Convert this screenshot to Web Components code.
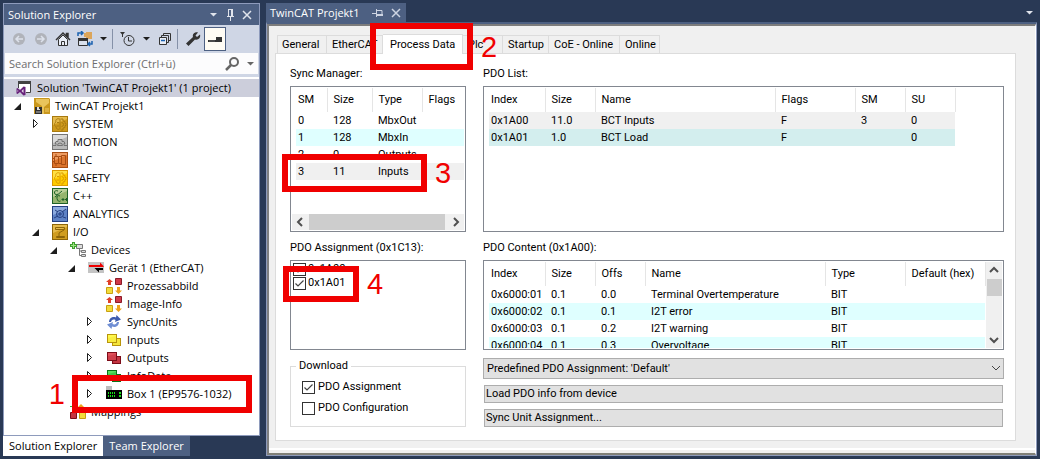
<!DOCTYPE html>
<html lang="en">
<head>
<meta charset="utf-8">
<title>TwinCAT Projekt1</title>
<style>
  html, body { margin: 0; height: 100%; }
  body { background: #293955; color: #000; font: 11px/16px "Open Sans", "Noto Sans", sans-serif; }
  app-shell { --form-font: 11px/16px Roboto, "Liberation Sans", sans-serif; }
</style>
</head>
<body>
<app-shell>
  <tool-window slot="side" heading="Solution Explorer">
    <explorer-toolbar slot="bar"></explorer-toolbar>
    <search-box slot="bar" hint="Search Solution Explorer (Ctrl+ü)"></search-box>
    <tree-item root selected icon="solution" label="Solution 'TwinCAT Projekt1' (1 project)">
      <tree-item open icon="project" label="TwinCAT Projekt1">
        <tree-item closed icon="system" label="SYSTEM"></tree-item>
        <tree-item icon="motion" label="MOTION"></tree-item>
        <tree-item icon="plc" label="PLC"></tree-item>
        <tree-item icon="safety" label="SAFETY"></tree-item>
        <tree-item icon="cpp" label="C++"></tree-item>
        <tree-item icon="analytics" label="ANALYTICS"></tree-item>
        <tree-item open icon="io" label="I/O">
          <tree-item open icon="devices" label="Devices">
            <tree-item open icon="ethercat" label="Gerät 1 (EtherCAT)">
              <tree-item icon="image" label="Prozessabbild"></tree-item>
              <tree-item icon="image" label="Image-Info"></tree-item>
              <tree-item closed icon="sync" label="SyncUnits"></tree-item>
              <tree-item closed icon="inputs" label="Inputs"></tree-item>
              <tree-item closed icon="outputs" label="Outputs"></tree-item>
              <tree-item closed icon="info" label="InfoData"></tree-item>
              <tree-item closed icon="box" label="Box 1 (EP9576-1032)">
                <call-out slot="mark" number="1" before style="--x:-12px;--y:-10px;--w:180px;--h:38px"></call-out>
              </tree-item>
            </tree-item>
          </tree-item>
          <tree-item icon="mappings" label="Mappings"></tree-item>
        </tree-item>
      </tree-item>
    </tree-item>
    <dock-tab slot="tabs" active label="Solution Explorer"></dock-tab>
    <dock-tab slot="tabs" label="Team Explorer"></dock-tab>
  </tool-window>

  <document-window heading="TwinCAT Projekt1">
    <tab-control>
      <tab-button slot="tabs" label="General" style="--w:50px"></tab-button>
      <tab-button slot="tabs" label="EtherCAT" style="--w:56px"></tab-button>
      <tab-button slot="tabs" label="Process Data" active style="--w:80px">
        <call-out number="2" style="--x:-13px;--y:-11px;--w:103px;--h:47px"></call-out>
      </tab-button>
      <tab-button slot="tabs" label="Plc" style="--w:40px"></tab-button>
      <tab-button slot="tabs" label="Startup" style="--w:46px"></tab-button>
      <tab-button slot="tabs" label="CoE - Online" style="--w:71px"></tab-button>
      <tab-button slot="tabs" label="Online" style="--w:40px"></tab-button>

      <list-field label="Sync Manager:" style="--box:146px">
        <data-list name="sync" scroll="x"></data-list>
        <call-out slot="mark" number="3" style="--x:-8px;--y:68px;--w:145px;--h:38px"></call-out>
      </list-field>
      <list-field label="PDO List:" style="--box:146px">
        <data-list name="pdo"></data-list>
      </list-field>
      <list-field label="PDO Assignment (0x1C13):" style="--box:90px">
        <check-option tight checked label="0x1A00"></check-option>
        <check-option tight checked label="0x1A01"></check-option>
        <call-out slot="mark" number="4" style="--x:-7px;--y:6px;--w:76px;--h:36px"></call-out>
      </list-field>
      <list-field label="PDO Content (0x1A00):" style="--box:90px">
        <data-list name="content" scroll="y"></data-list>
      </list-field>
      <group-box label="Download">
        <check-option checked label="PDO Assignment"></check-option>
        <check-option label="PDO Configuration"></check-option>
      </group-box>
      <action-stack></action-stack>
    </tab-control>
  </document-window>
</app-shell>

<script>
const tile = (a, b, line, inner) =>
  `<rect x="0.5" y="0.5" width="15" height="15" fill="${a}" stroke="${line}"/><path d="M1 15V9L15 3v12z" fill="${b}"/><g fill="none" stroke="${line}">${inner}</g>`;
const stack = (back, front, line) =>
  `<rect x="6.5" y="6.5" width="8" height="7" fill="${back}" stroke="${line}"/><rect x="1.5" y="2.5" width="9" height="8" fill="${front}" stroke="${line}"/><path d="M2 10V6l8-2v6z" fill="${back}" opacity=".6"/>`;
const brain = '<path d="M8 2.5v11M7.5 3C5 2 3 4 4 6 2 7 2 10 4 10.5 4 13 6 14 7.5 13M5 6.5h2M4.5 10H7"/><path d="M9 3h2v2l2 .5v2h1v2h-1v2l-2 .5v2H9M9.5 6.5a2 2 0 0 1 0 4"/>';

/* 16 x 16 drawings, keyed by the name an ui-icon asks for */
const ICONS = {
  solution: '<path d="M2.5 8V1.5h12v11H10" fill="#fff" stroke="#424242"/><path d="M2 1h13v3H2z" fill="#424242"/><path d="M7.500 6.500L4 10 1.500 8 .5 8.500v5l1 .5L4 12l3.500 3.500L9.500 15V7z" fill="#68217a"/><path d="M7.500 9v4L5.500 11zM1.500 10v2l1-1z" fill="#e8dcec"/>',
  project: '<path d="M0 0h15l1 1v15H0z" fill="#c9971c"/><path d="M2 1h13v4l-5 4v7H8V8L2 4z" fill="#e9c45c"/><path d="M11 10h4v4h-4z" fill="#dcb040"/><path d="M1 9h7v7H1z" fill="#303030"/><path d="M3 9h3v3H3z" fill="#ddd"/><path d="M5 9h1v2H5z" fill="#303030"/><path d="M2 13h5v2H2z" fill="#777"/>',
  system: tile('#e6bb4c', '#cf9a1c', '#a87a10', brain),
  motion: tile('#dadada', '#b9b9b9', '#747474', '<path d="M1 11.5h3v-2h-1l1-2h2v-2h4v2h2l1 2h-1v2h3M5.500 11.500a2.500 2.500 0 0 1 5 0z"/>'),
  plc: tile('#ee9c62', '#dc752d', '#a94d12', '<path d="M2.5 4.500h4v7h-4zM9.500 3.500h4v9h-4zM1 6.500h1M1 9.500h1M7 4.500h2M7 11.500h2M4 2v2M4 12v2"/>'),
  safety: tile('#ffe044', '#ffcc00', '#dc9a00', brain),
  cpp: tile('#b9cf98', '#95b56e', '#1f6228', '<path d="M6 3C4 2 2 3 2.500 5S5 7 6 6M8 8C6 7 4.500 8 5 10.500S7 14 8.500 13M3 9l7-6M9.500 11.500h3M11 10v3M13 11.500h3M14.500 10v3"/>'),
  analytics: tile('#8caade', '#5e82c6', '#243f80', '<path d="M2 12l4-2M10 6l4-3M3 4l3 2M11 11l3 1"/><circle cx="8" cy="8" r="3.500"/><path d="M6 8h4M8 6v4"/>'),
  io: tile('#e6bb4c', '#d09d20', '#8d6509', '<path d="M3.500 3.500h9v2h-9zM12 6L7 9v3M4.500 12.500h8v1h-8z"/>'),
  devices: '<path d="M9.500 6v7.500H12M9.500 9H12" fill="none" stroke="#777"/><path d="M6.500 2.500h6v4h-6zM11.500 8.500h4v2h-4zM11.500 12.500h4v2h-4z" fill="#ddd" stroke="#777"/><path d="M2 0h3v2h2v3H5v2H2V5H0V2h2z" fill="#3e9e2e"/><path d="M3 1h1v5H3zM1 3h5v1H1z" fill="#9be37f"/>',
  ethercat: '<path d="M0 2h16v11H0z" fill="#c4c4c4"/><path d="M1 5h11V2.500L16 6.500 15 7H1z" fill="#f00000"/><path d="M15 8v2h-4v2.500L6.500 8z" fill="#000"/>',
  image: '<path d="M3.500 1l3.500 3H5v3H2V4H0z" fill="#e04028"/><path d="M9.500.5h6v6h-6z" fill="#d03848" stroke="#8a1c28"/><path d="M.5 9.500h6v6h-6z" fill="#f2dc3c" stroke="#c8a010"/><path d="M12.500 16L9 12.500h2V9h3v3.500h2z" fill="#efa41c"/>',
  sync: '<path d="M3 8C3 4 7 2 10 3.500L10.500 1 15 5.500 9 8l.5-2C7 5 5.500 6 5 8z" fill="#3d5cae"/><path d="M13 8c0 4-4 6-7 4.500L5.500 15 1 10.500 7 8l-.5 2C9 11 10.500 10 11 8z" fill="#6f8ed4"/>',
  inputs: stack('#f4e43a', '#fff94c', '#b8940c'),
  outputs: stack('#c43440', '#e0525c', '#7c0c18'),
  info: stack('#2eb83c', '#58e060', '#0a7418'),
  box: '<path d="M0 0h6v5H0z" fill="#bdbdbd"/><path d="M0 4h16v9H0z" fill="#000"/><path d="M2 6h1v2H2zM4 6h1v2H4zM6 6h1v2H6zM8 6h1v2H8zM2 9h1v2H2zM4 9h1v2H4zM6 9h1v2H6zM8 9h1v2H8zM13 6h2v2h-2zM13 9h2v2h-2z" fill="#18e018"/>',
  mappings: '<path d="M0 2h3v1H0z" fill="#2eb83c"/><path d="M11 0l4 4h-8z" fill="#efa41c"/><path d="M.5 8.500h6v6h-6z" fill="#c43440" stroke="#7c0c18"/><path d="M9.500 8.500h6v6h-6z" fill="#f2dc3c" stroke="#c8a010"/>',
  back: '<circle cx="8" cy="8" r="6" fill="#b0b3ba"/><path d="M12 8H5M8 5L5 8l3 3" fill="none" stroke="#dde2ec" stroke-width="1.500"/>',
  forward: '<circle cx="8" cy="8" r="6" fill="#b0b3ba"/><path d="M4 8h7M8 5l3 3-3 3" fill="none" stroke="#dde2ec" stroke-width="1.500"/>',
  home: '<path d="M1 9l7-7 7 7M11.500 5V2.500h1.500V7" fill="none" stroke="#333" stroke-width="1.500"/><path d="M3.500 8.500v6h9v-6L8 4z" fill="#e9edf5" stroke="#333"/><path d="M6.500 14.500v-4h3v4" fill="none" stroke="#333"/>',
  views: '<path d="M9 1h6v7H9zM7 2h4v4H7z" fill="#dba55a"/><path d="M1.500 8.500h9v6h-9z" fill="#d9e0ec" stroke="#333"/><path d="M1 7h10v3H1z" fill="#333"/><path d="M1 5V2h4M4 0l2 2-2 2M15 10v3h-3M13 11l-2 2 2 2" fill="none" stroke="#1b62b0" stroke-width="1.500"/>',
  pending: '<path d="M0 1h5L3 3.500V6H2V3.500z" fill="#333"/><circle cx="9" cy="9.500" r="5" fill="none" stroke="#333"/><path d="M8.500 6v4H12" fill="none" stroke="#333"/>',
  collapse: '<path d="M7.500 4V2.500h7v7H13M5.500 6V4.500h7v7H11" fill="none" stroke="#333"/><path d="M3.500 6.500h7v7h-7z" fill="#e9edf5" stroke="#333"/><path d="M5 9.500h4" stroke="#1b62b0" stroke-width="1.500"/>',
  wrench: '<path d="M15 3.500L12 6 10.500 4.500 13 1.500C10 .5 7 3 8 6L1 12.500 3.500 15 10 8.500c3 1 6-1.500 5-5z" fill="#333"/>',
  preview: '<path d="M1 9h8V6h6v5H1z" fill="#333"/><path d="M2 10h6" stroke="#666"/>',
  search: '<circle cx="10" cy="6" r="4" fill="none" stroke="#666" stroke-width="2"/><path d="M7 9l-5 5" stroke="#666" stroke-width="2.500"/>',
  drop: '<path d="M5 6h7L8.500 9.500z" fill="currentColor"/>',
  pin: '<path d="M5 9.500h7M8.500 10v4M6.500 3v6M6 2.500h5M10 3v6" fill="none" stroke="currentColor"/><path d="M9 3h2v6H9z" fill="currentColor"/>',
  pinSide: '<path d="M6.500 4v8M7 5.500h5v4M2 8.500h4" fill="none" stroke="currentColor"/><path d="M7 9h6v2H7z" fill="currentColor"/>',
  close: '<path d="M4 4l8 8M12 4l-8 8" stroke="currentColor" stroke-width="1.500"/>',
  opened: '<path d="M9 5v7H2z" fill="#1e1e1e"/>',
  closed: '<path d="M3.500 3.500v8l4-4z" fill="#fff" stroke="#1e1e1e"/>',
  left: '<path d="M10 4L6 8l4 4" fill="none" stroke="#505050" stroke-width="2"/>',
  right: '<path d="M6 4l4 4-4 4" fill="none" stroke="#505050" stroke-width="2"/>',
  up: '<path d="M4 10l4-4 4 4" fill="none" stroke="#505050" stroke-width="2"/>',
  down: '<path d="M4 6l4 4 4-4" fill="none" stroke="#505050" stroke-width="2"/>',
  chevron: '<path d="M4 6l4 4 4-4" fill="none" stroke="#444"/>'
};

/* Shared base: opens the shadow root and fills it from the class's view(). */
class Part extends HTMLElement {
  connectedCallback() {
    if (this.shadowRoot) return;
    const template = document.createElement('template');
    template.innerHTML = `<style>*{box-sizing:border-box}button{font:inherit;color:inherit;margin:0;padding:0;border:0;background:none}:host{box-sizing:border-box}</style>${this.view()}`;
    this.attachShadow({ mode: 'open' }).append(template.content.cloneNode(true));
  }
  get label() { return this.getAttribute('label') || ''; }
  has(name) { return this.hasAttribute(name); }
}

customElements.define('ui-icon', class extends Part {
  view() {
    return `<style>:host{display:block;flex:none;width:16px;height:16px}svg{display:block}</style>
      <svg width="16" height="16" viewBox="0 0 16 16" aria-hidden="true">${ICONS[this.getAttribute('name')]}</svg>`;
  }
});

customElements.define('app-shell', class extends Part {
  view() {
    return `<style>
      :host{display:grid;grid-template-columns:257px minmax(0,1fr);gap:6px;min-height:100%;padding:3px}
      ::slotted(*){min-width:0}</style>
      <slot name="side"></slot><slot></slot>`;
  }
});

customElements.define('tool-window', class extends Part {
  view() {
    return `<style>
      :host{display:flex;flex-direction:column}
      section{display:flex;flex-direction:column;border:1px solid #8e9bbc;background:#cfd6e5;min-height:433px}
      header{display:flex;align-items:center;height:21px;padding:0 4px;background:#4d6082;color:#fff}
      h2{flex:1;margin:0;font:inherit}
      header button{width:16px;height:16px;margin-left:1px;color:#e0e4ec}
      .tree{flex:1;margin-top:3px;padding-top:2px;background:#fff}
      nav{display:flex}</style>
      <section><header><h2>${this.getAttribute('heading')}</h2>
        <button aria-label="Window menu"><ui-icon name="drop"></ui-icon></button>
        <button aria-label="Auto hide"><ui-icon name="pin"></ui-icon></button>
        <button aria-label="Close"><ui-icon name="close"></ui-icon></button></header>
        <slot name="bar"></slot><div class="tree" role="tree"><slot></slot></div></section>
      <nav><slot name="tabs"></slot></nav>`;
  }
});

customElements.define('explorer-toolbar', class extends Part {
  view() {
    const button = (icon, name, cls = '') =>
      `<button class="${cls}" aria-label="${name}"><ui-icon name="${icon}"></ui-icon></button>`;
    return `<style>
      :host{display:flex;align-items:center;height:28px;padding-left:4px;color:#1e1e1e}
      button{display:flex;justify-content:center;align-items:center;width:22px;height:24px}
      .drop{width:14px}
      .on{border:1px solid #4d6082;background:#fffcf4}
      i{width:1px;height:20px;margin:0 4px 0 2px;background:#8591a8}</style>
      ${button('back', 'Back')}${button('forward', 'Forward')}${button('home', 'Home')}${button('views', 'Switch views')}
      ${button('drop', 'Views menu', 'drop')}<i></i>${button('pending', 'Pending changes filter')}${button('drop', 'Filter menu', 'drop')}
      ${button('collapse', 'Collapse all')}<i></i>${button('wrench', 'Properties')}${button('preview', 'Preview selected items', 'on')}`;
  }
});

customElements.define('search-box', class extends Part {
  view() {
    return `<style>
      :host{display:flex;align-items:center;height:21px;margin:0 1px;padding-left:4px;background:#fcfcfd;color:#1e1e1e}
      input{flex:1;min-width:0;padding:0;border:0;outline:0;background:none;font:inherit}
      input::placeholder{color:#6d6d6d;opacity:1}
      button{width:16px;height:16px;color:#666}
      button:first-of-type{margin-right:2px}</style>
      <input type="search" aria-label="Search Solution Explorer" placeholder="${this.getAttribute('hint')}">
      <button aria-label="Search"><ui-icon name="search"></ui-icon></button>
      <button aria-label="Search options"><ui-icon name="drop"></ui-icon></button>`;
  }
});

customElements.define('tree-item', class extends Part {
  view() {
    const arrow = this.has('open') ? 'opened' : this.has('closed') ? 'closed' : '';
    return `<style>
      :host{display:block}
      .row{position:relative;display:flex;align-items:center;height:18px;white-space:nowrap}
      .lead{flex:none;width:22px}
      .row ui-icon + span{margin-left:5px}
      .group{padding-left:18px}
      :host([root]) .lead{width:12px}
      :host([root]) .group{padding-left:8px}
      :host([selected]) .row{background:#cccedb}</style>
      <div class="row" role="treeitem"><div class="lead">${arrow ? `<ui-icon name="${arrow}"></ui-icon>` : ''}</div>
        <ui-icon name="${this.getAttribute('icon')}"></ui-icon><span>${this.label}</span><slot name="mark"></slot></div>
      <div class="group" role="group"><slot></slot></div>`;
  }
});

customElements.define('dock-tab', class extends Part {
  view() {
    return `<style>
      :host{display:block}
      button{height:20px;padding:0 6px;background:#4d6082;color:#fff}
      :host([active]) button{background:#fff;color:#000}</style><button>${this.label}</button>`;
  }
});

customElements.define('document-window', class extends Part {
  view() {
    return `<style>
      :host{display:flex;flex-direction:column;color:#000}
      header{display:flex;align-items:center;justify-content:space-between;height:19px;color:#e0e4ec}
      .tab{display:flex;align-items:center;height:19px;width:140px;padding:0 2px 0 4px;background:#4d6082;color:#fff}
      .tab span{flex:1}
      .tab ui-icon{color:#cdd4e2}
      button{width:16px;height:16px;margin-left:2px}
      .frame{border:1px solid #8e9bbc;border-top:2px solid #4d6082}
      .edge{border:solid;border-width:2px 1px 2px 2px;border-color:#7c7c7c #fff #808078 #808080;background:#f0f0f0;padding:7px 19px 0 6px}
      .foot{height:5px;margin:7px -19px 0 -6px;border-top:2px solid #fff}</style>
      <header><div class="tab"><span>${this.getAttribute('heading')}</span>
        <button aria-label="Pin tab"><ui-icon name="pinSide"></ui-icon></button>
        <button aria-label="Close tab"><ui-icon name="close"></ui-icon></button></div>
        <button aria-label="Open documents"><ui-icon name="drop"></ui-icon></button></header>
      <div class="frame"><div class="edge"><slot></slot><div class="foot"></div></div></div>`;
  }
});

customElements.define('tab-control', class extends Part {
  view() {
    return `<style>
      :host{display:block;font:var(--form-font)}
      nav{display:flex;align-items:flex-end;height:20px;padding-left:2px}
      .page{display:grid;grid-template-columns:176px minmax(0,1fr);column-gap:17px;row-gap:8px;padding:12px 11px 13px 14px;border:1px solid #dcdcdc;background:#fff}</style>
      <nav role="tablist"><slot name="tabs"></slot></nav><div class="page"><slot></slot></div>`;
  }
});

customElements.define('tab-button', class extends Part {
  view() {
    return `<style>
      :host{display:block;position:relative;width:var(--w);height:18px}
      button{width:100%;height:18px;padding-left:5px;border:1px solid #dcdcdc;border-width:1px 1px 0 0;background:#f0f0f0;text-align:left;white-space:nowrap}
      :host(:first-child) button{padding-left:4px;border-left-width:1px}
      :host([active]){height:20px;margin-bottom:-1px}
      :host([active]) button{height:20px;padding-left:7px;background:#fff}</style>
      <button role="tab">${this.label}</button><slot></slot>`;
  }
});

customElements.define('list-field', class extends Part {
  view() {
    return `<style>
      :host{display:block;min-width:0}
      h3{margin:0 0 4px;font:inherit}
      .wrap{position:relative}
      .box{height:var(--box);padding:1px;overflow:hidden;border:1px solid #828790;background:#fff}</style>
      <h3>${this.label}</h3><div class="wrap"><div class="box" role="group" aria-label="${this.label}"><slot></slot></div><slot name="mark"></slot></div>`;
  }
});

const LISTS = {
  sync: {
    widths: [31, 45, 50, 43], heads: ['SM', 'Size', 'Type', 'Flags'],
    rows: [['0', '128', 'MbxOut', ''], ['1', '128', 'MbxIn', ''], ['2', '0', 'Outputs', ''], ['3', '11', 'Inputs', '']],
    tints: ['', '#dfffff', '', '#f0f0f0']
  },
  pdo: {
    widths: [56, 50, 180, 80, 50, 50], heads: ['Index', 'Size', 'Name', 'Flags', 'SM', 'SU'],
    rows: [['0x1A00', '11.0', 'BCT Inputs', 'F', '3', '0'], ['0x1A01', '1.0', 'BCT Load', 'F', '', '0']],
    tints: ['#f0f0f0', '#d3eeee']
  },
  content: {
    widths: [56, 50, 50, 180, 80, 80], heads: ['Index', 'Size', 'Offs', 'Name', 'Type', 'Default (hex)'],
    rows: [['0x6000:01', '0.1', '0.0', 'Terminal Overtemperature', 'BIT', ''], ['0x6000:02', '0.1', '0.1', 'I2T error', 'BIT', ''],
      ['0x6000:03', '0.1', '0.2', 'I2T warning', 'BIT', ''], ['0x6000:04', '0.1', '0.3', 'Overvoltage', 'BIT', '']],
    tints: ['', '#dfffff', '', '#dfffff']
  }
};

customElements.define('data-list', class extends Part {
  view() {
    const list = LISTS[this.getAttribute('name')];
    const scroll = this.getAttribute('scroll');
    const bar = scroll === 'x'
      ? '<div class="bar"><ui-icon name="left"></ui-icon><i></i><ui-icon name="right"></ui-icon></div>'
      : scroll === 'y' ? '<div class="bar"><ui-icon name="up"></ui-icon><i></i><ui-icon name="down"></ui-icon></div>' : '';
    return `<style>
      :host{display:flex;height:100%}
      :host([scroll=x]){flex-direction:column}
      .view{flex:1;min-width:0;min-height:0;overflow:hidden;padding-left:4px}
      table{border-collapse:collapse;table-layout:fixed;width:1px}
      th,td{overflow:hidden;padding:0 0 0 6px;font:inherit;text-align:left;white-space:nowrap}
      th{height:24px;border-right:1px solid #e5e5e5}
      td{height:17px;padding-top:1px}
      th:first-child,td:first-child{padding-left:2px}
      .bar{display:flex;align-items:center;background:#f0f0f0}
      :host([scroll=x]) .bar{height:16px}
      :host([scroll=x]) i{flex:1;height:16px;margin:0 3px 0 1px;background:#cdcdcd}
      :host([scroll=y]) .bar{width:16px;flex-direction:column;justify-content:space-between}
      :host([scroll=y]) i{width:15px;height:17px;margin-bottom:36px;background:#cdcdcd}</style>
      <div class="view"><table><colgroup>${list.widths.map(w => `<col style="width:${w}px">`).join('')}</colgroup>
        <thead><tr>${list.heads.map(h => `<th>${h}</th>`).join('')}</tr></thead>
        <tbody>${list.rows.map((row, i) => `<tr style="background:${list.tints[i] || 'none'}">${row.map(c => `<td>${c}</td>`).join('')}</tr>`).join('')}</tbody>
      </table></div>${bar}`;
  }
});

customElements.define('check-option', class extends Part {
  view() {
    return `<style>
      :host{display:block;height:20px}
      :host([tight]){height:14px}
      label{display:flex;align-items:center;gap:3px;height:100%}
      :host([tight]) label{padding-left:1px;gap:2px}
      span{display:grid}
      input,svg{grid-area:1/1;width:13px;height:13px;margin:0}
      input{appearance:none;border:1px solid #333;background:#fff}
      svg{display:none;pointer-events:none}
      input:checked + svg{display:block}</style>
      <label><span><input type="checkbox" ${this.has('checked') ? 'checked' : ''}><svg viewBox="0 0 13 13"><path d="M2.500 6.500L5 9l5.500-5.500" fill="none" stroke="#444" stroke-width="1.200"/></svg></span>${this.label}</label>`;
  }
});

customElements.define('group-box', class extends Part {
  view() {
    return `<style>
      :host{display:block}
      fieldset{height:69px;margin:0;padding:3px 0 0 11px;border:1px solid #dcdcdc;min-width:0}
      legend{margin-left:-6px;padding:0 3px}
      slot{display:grid;row-gap:1px}</style>
      <fieldset><legend>${this.label}</legend><slot></slot></fieldset>`;
  }
});

customElements.define('action-stack', class extends Part {
  view() {
    return `<style>
      :host{display:flex;flex-direction:column;gap:6px}
      .pick{position:relative;display:grid}
      select{height:21px;padding:0 20px 0 3px;appearance:none;border:1px solid #adadad;border-radius:0;background:#e1e1e1;color:#000;font:inherit}
      .pick ui-icon{position:absolute;right:0;top:2px;pointer-events:none}
      button{height:18px;margin:0 1px;padding:0 0 0 1px;border:1px solid #adadad;background:#e1e1e1;text-align:left}</style>
      <div class="pick"><select aria-label="Predefined PDO Assignment"><option>Predefined PDO Assignment: 'Default'</option></select><ui-icon name="chevron"></ui-icon></div>
      <button>Load PDO info from device</button><button>Sync Unit Assignment...</button>`;
  }
});

/* Numbered frame laid over the control it points out. */
customElements.define('call-out', class extends Part {
  view() {
    return `<style>
      :host{position:absolute;z-index:5;left:var(--x);top:var(--y);width:var(--w);height:var(--h);display:flex;align-items:center;border:6px solid #f00000;color:#f00000;font:29px/30px "Liberation Sans",Arial,sans-serif;pointer-events:none}
      span{position:absolute;left:100%;padding-left:14px}
      :host([before]) span{left:auto;right:100%;padding:0 13px 0 0}</style>
      <span>${this.getAttribute('number')}</span>`;
  }
});
</script>
</body>
</html>
